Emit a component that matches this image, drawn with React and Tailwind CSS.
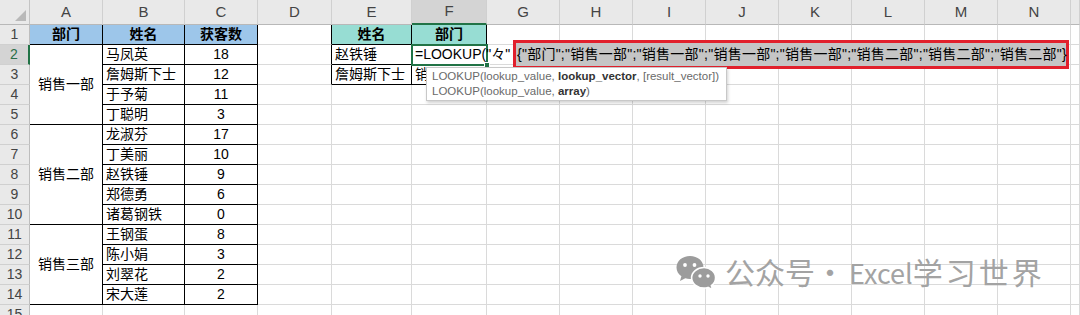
import React from 'react';

const LETTERS = ['A', 'B', 'C', 'D', 'E', 'F', 'G', 'H', 'I', 'J', 'K', 'L', 'M', 'N', ''];

const groups = [
  { dept: '销售一部', start: 2, span: 'row-span-4', people: [['马凤英', 18], ['詹姆斯下士', 12], ['于予菊', 11], ['丁聪明', 3]] },
  { dept: '销售二部', start: 6, span: 'row-span-5', people: [['龙淑芬', 17], ['丁美丽', 10], ['赵铁锤', 9], ['郑德勇', 6], ['诸葛钢铁', 0]] },
  { dept: '销售三部', start: 11, span: 'row-span-4', people: [['王钢蛋', 8], ['陈小娟', 3], ['刘翠花', 2], ['宋大莲', 2]] },
];

// sheet contents keyed by "row-col", col 1 = A
const cells = {};
const skip = {};
cells['1-1'] = { text: '部门', bold: true, fill: 'bg-[#9dc6ea]', center: true };
cells['1-2'] = { text: '姓名', bold: true, fill: 'bg-[#9dc6ea]', center: true };
cells['1-3'] = { text: '获客数', bold: true, fill: 'bg-[#9dc6ea]', center: true };
groups.forEach((g) => {
  cells[`${g.start}-1`] = { text: g.dept, center: true, span: g.span, rows: g.people.length };
  g.people.forEach(([name, n], i) => {
    const r = g.start + i;
    if (i > 0) skip[`${r}-1`] = true;
    cells[`${r}-2`] = { text: name };
    cells[`${r}-3`] = { text: String(n), center: true };
  });
});
cells['1-5'] = { text: '姓名', bold: true, fill: 'bg-[#97ddd3]', center: true };
cells['1-6'] = { text: '部门', bold: true, fill: 'bg-[#97ddd3]', center: true };
cells['2-5'] = { text: '赵铁锤' };
cells['3-5'] = { text: '詹姆斯下士' };
cells['3-6'] = { text: '销售一部' };

const inTable = (r, c) => (r >= 1 && r <= 14 && c >= 1 && c <= 3) || (r >= 1 && r <= 3 && c >= 5 && c <= 6);

const Corner = () => (
  <div className="relative bg-[#e9e9e9] border-r border-b border-r-[#c4c4c4] border-b-[#b8b8b8]">
    <svg className="absolute right-[3px] bottom-[3px]" width="11" height="11" viewBox="0 0 11 11">
      <polygon points="11,0 11,11 0,11" fill="#b9b9b9" />
    </svg>
  </div>
);

// in-cell editor: active border, typed formula, highlighted array and the function hint
const EditOverlay = () => (
  <>
    <div className="absolute -left-[1px] -top-[1px] w-[77px] h-[22px] border-2 border-[#217346] z-10" />
    <div className="absolute left-[72px] top-[17px] w-[6px] h-[6px] bg-[#217346] border border-white z-10" />
    <div className="absolute left-[3px] top-0 h-full flex items-center whitespace-nowrap z-20 text-[14px] text-black">
      =LOOKUP("々"
    </div>
    <div className="absolute left-[101px] -top-[5px] w-[556px] h-[29px] border-[3px] border-[#e1202c] bg-[#c5c5c5] z-20 flex items-center pl-[1px] whitespace-nowrap text-[14px] tracking-[0.25px] text-black">
      {'{"部门";"销售一部";"销售一部";"销售一部";"销售一部";"销售二部";"销售二部";"销售二部"}'}
    </div>
    <div className="absolute left-[14px] top-[22px] w-[301px] h-[34px] bg-white border border-[#c8c8c8] shadow-[1px_2px_3px_rgba(0,0,0,0.18)] z-30 px-[5px] pt-[1px] text-[11.5px] leading-[15px] text-[#6a6a6a] whitespace-nowrap">
      <div>
        LOOKUP(lookup_value, <span className="font-bold text-[#333]">lookup_vector</span>, [result_vector])
      </div>
      <div>
        LOOKUP(lookup_value, <span className="font-bold text-[#333]">array</span>)
      </div>
    </div>
  </>
);

const WeChat = () => (
  <svg width="44" height="36" viewBox="0 0 44 36">
    <path d="M15 2C7.3 2 1.5 7.2 1.5 13.4c0 3.6 1.9 6.7 4.9 8.8L5 27l5.3-2.7c1.5.4 3 .6 4.7.6 7.7 0 13.5-5.2 13.5-11.5S22.7 2 15 2z" fill="#9c9c9c" />
    <circle cx="10" cy="11" r="1.9" fill="#fff" />
    <circle cx="19.5" cy="11" r="1.9" fill="#fff" />
    <path d="M29 13.5c-6.9 0-12.4 4.6-12.4 10.3S22.1 34 29 34c1.4 0 2.8-.2 4-.6l4.6 2.4-1.2-4.2c2.6-1.9 4.2-4.6 4.2-7.8 0-5.7-5.5-10.3-11.6-10.3z" fill="#9c9c9c" stroke="#fff" strokeWidth="1.6" />
    <circle cx="25" cy="22" r="1.7" fill="#fff" />
    <circle cx="33" cy="22" r="1.7" fill="#fff" />
  </svg>
);

export default function App() {
  const rows = [];
  for (let r = 1; r <= 15; r++) rows.push(r);

  return (
    <div className="relative w-[1080px] h-[315px] overflow-hidden bg-white font-['Liberation_Sans','Noto_Sans_CJK_SC',sans-serif]">
      <div className="grid grid-cols-[30px_73px_82px_73px_74px_80px_75px_73px_73px_73px_73px_73px_73px_73px_73px_1fr] grid-rows-[25px_repeat(15,20px)]">
        <Corner />
        {LETTERS.map((l, i) => (
          <div
            key={l + i}
            className={`flex items-center justify-center border-r border-r-[#d0d0d0] text-[15px] text-[#444] ${
              l === 'F' ? 'bg-[#d4d4d4] border-b-2 border-b-[#217346]' : 'bg-[#e9e9e9] border-b border-b-[#b8b8b8]'
            }`}
          >
            {l}
          </div>
        ))}
        {rows.map((r) => (
          <React.Fragment key={r}>
            <div
              className={`flex items-center justify-center border-b border-b-[#d0d0d0] text-[14px] ${
                r === 2 ? 'bg-[#d4d4d4] text-[#2c6e48] border-r-2 border-r-[#217346]' : 'bg-[#e9e9e9] text-[#444] border-r border-r-[#bdbdbd]'
              }`}
            >
              {r}
            </div>
            {LETTERS.map((_, i) => {
              const c = i + 1;
              const key = `${r}-${c}`;
              if (skip[key]) return null;
              const cell = cells[key] || {};
              const lastRow = r + (cell.rows || 1) - 1;
              const rightBlack = inTable(r, c) || inTable(r, c + 1);
              const bottomBlack = inTable(lastRow, c) || inTable(lastRow + 1, c);
              const isActive = r === 2 && c === 6;
              return (
                <div
                  key={key}
                  className={`flex items-center px-[3px] whitespace-nowrap text-[14px] text-black border-r border-b ${
                    rightBlack ? 'border-r-black' : 'border-r-[#dadada]'
                  } ${bottomBlack ? 'border-b-black' : 'border-b-[#dadada]'} ${cell.fill || ''} ${cell.span || ''} ${
                    cell.center ? 'justify-center' : ''
                  } ${cell.bold ? 'font-bold' : ''} ${isActive ? 'relative' : 'overflow-hidden'}`}
                >
                  {isActive ? <EditOverlay /> : cell.text}
                </div>
              );
            })}
          </React.Fragment>
        ))}
      </div>

      {/* watermark */}
      <div className="absolute left-[675px] top-[254px] flex items-center gap-[6px] text-[30px] leading-[34px] text-[#a3a3a3] font-['Noto_Sans_CJK_SC',sans-serif] whitespace-nowrap">
        <WeChat />
        <span>
          公众号·<span className="text-[27px] ml-[4px]">Excel</span>
          <span className="tracking-[3px]">学习世界</span>
        </span>
      </div>
    </div>
  );
}
